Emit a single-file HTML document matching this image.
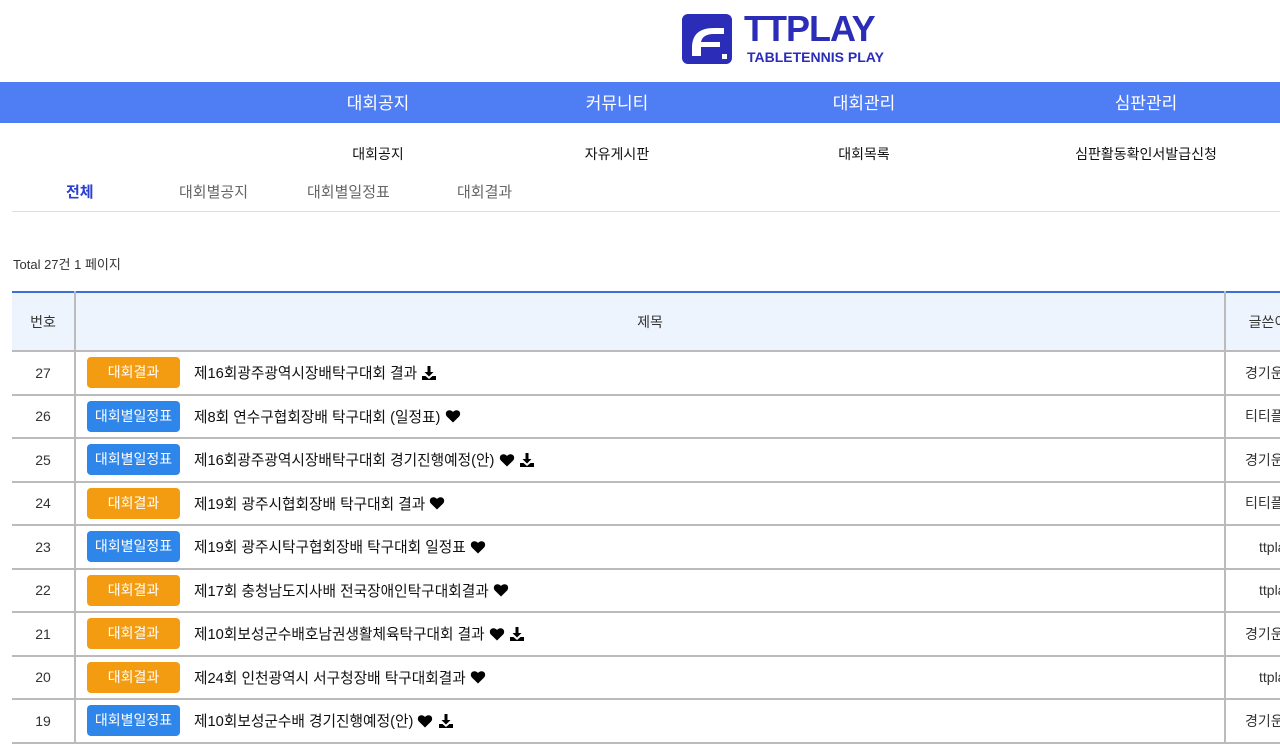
<!DOCTYPE html>
<html><head><meta charset="utf-8"><style>
*{margin:0;padding:0;box-sizing:border-box}
body{width:1280px;height:726px;overflow:hidden;background:#fff;font-family:"Liberation Sans","Noto Sans CJK KR",sans-serif;color:#222;position:relative}
.abs{position:absolute}
.nav{top:82px;left:0;width:1280px;height:41px;background:#4f7ef4}
.nav span,.sub span{position:absolute;transform:translateX(-50%);white-space:nowrap}
.nav span{color:#fff;font-size:17px;top:7px}
.sub span{font-size:14px;color:#111;top:144px}
.tab{top:181px;font-size:15px;color:#666}
table{position:absolute;left:12px;top:291px;border-collapse:collapse;width:1300px;font-size:14px}
thead tr{background:#eef4fd;border-top:2px solid #3d6fd6}
th{font-weight:normal;height:59px;border-right:2px solid #bbb;border-bottom:2px solid #bbb;color:#333}
td{height:43.5px;border-right:2px solid #bbb;border-bottom:2px solid #bbb;color:#333;vertical-align:middle}
td.n{text-align:center;width:63px}
td.t{width:1150px;padding-left:11px;color:#111;font-size:14.7px}
td.t *{vertical-align:middle}
td.a{text-align:left;padding-left:19px}
.b{display:inline-block;width:93px;height:31px;line-height:30px;border-radius:4px;color:#fff;text-align:center;font-size:14px;margin-right:14px}
.o{background:#f39c12}.bl{background:#2f86ea}
</style></head><body>
<svg width="0" height="0" style="position:absolute"><defs>
<symbol id="hr" viewBox="0 0 16 16"><path d="M8 14.5L2 8.6C0.3 6.9 0.5 4 2.5 2.8 4.4 1.7 6.6 2.3 8 4 9.4 2.3 11.6 1.7 13.5 2.8 15.5 4 15.7 6.9 14 8.6z" fill="#000"/></symbol>
<symbol id="dl" viewBox="0 0 16 16"><path d="M6.5 1h3v6h3L8 11.5 3.5 7h3z M1 11h3.5l3.5 3 3.5-3H15v4H1z" fill="#000"/></symbol>
</defs></svg>
<svg class="abs" style="left:682px;top:14px" width="50" height="50" viewBox="0 0 50 50"><rect width="50" height="50" rx="6" fill="#2b2db8"/><path d="M10 34c0-14 8-20 22-20h10v6H32c-8 0-12 3-13 8h19v5H19v9h-9z" fill="#fff"/><rect x="40" y="40" width="5" height="5" fill="#fff"/></svg>
<div class="abs" style="left:744px;top:8px;font-size:36px;font-weight:bold;color:#2b2db8;letter-spacing:-1px">TTPLAY</div>
<div class="abs" style="left:747px;top:49px;font-size:14px;color:#2b2db8;font-weight:bold">TABLETENNIS PLAY</div>
<div class="abs nav"><span style="left:378px">대회공지</span><span style="left:617px">커뮤니티</span><span style="left:864px">대회관리</span><span style="left:1146px">심판관리</span></div>
<div class="sub"><span style="left:378px">대회공지</span><span style="left:617px">자유게시판</span><span style="left:864px">대회목록</span><span style="left:1146px">심판활동확인서발급신청</span></div>
<div class="abs tab" style="left:66px;color:#2b3fd0;font-weight:bold">전체</div>
<div class="abs tab" style="left:179px">대회별공지</div>
<div class="abs tab" style="left:307px">대회별일정표</div>
<div class="abs tab" style="left:457px">대회결과</div>
<div class="abs" style="left:12px;top:211px;width:1268px;height:1px;background:#ddd"></div>
<div class="abs" style="left:13px;top:254px;font-size:13px;color:#333">Total 27건 1 페이지</div>
<table>
<thead><tr><th>번호</th><th>제목</th><th>글쓴이</th></tr></thead>
<tbody>
<tr><td class="n">27</td><td class="t"><span class="b o">대회결과</span><span>제16회광주광역시장배탁구대회 결과</span> <svg width="16" height="16"><use href="#dl"/></svg></td><td class="a">경기운영</td></tr>
<tr><td class="n">26</td><td class="t"><span class="b bl">대회별일정표</span><span>제8회 연수구협회장배 탁구대회 (일정표)</span> <svg width="16" height="16"><use href="#hr"/></svg></td><td class="a">티티플</td></tr>
<tr><td class="n">25</td><td class="t"><span class="b bl">대회별일정표</span><span>제16회광주광역시장배탁구대회 경기진행예정(안)</span> <svg width="16" height="16"><use href="#hr"/></svg> <svg width="16" height="16"><use href="#dl"/></svg></td><td class="a">경기운영</td></tr>
<tr><td class="n">24</td><td class="t"><span class="b o">대회결과</span><span>제19회 광주시협회장배 탁구대회 결과</span> <svg width="16" height="16"><use href="#hr"/></svg></td><td class="a">티티플</td></tr>
<tr><td class="n">23</td><td class="t"><span class="b bl">대회별일정표</span><span>제19회 광주시탁구협회장배 탁구대회 일정표</span> <svg width="16" height="16"><use href="#hr"/></svg></td><td class="a" style="padding-left:33px">ttplay</td></tr>
<tr><td class="n">22</td><td class="t"><span class="b o">대회결과</span><span>제17회 충청남도지사배 전국장애인탁구대회결과</span> <svg width="16" height="16"><use href="#hr"/></svg></td><td class="a" style="padding-left:33px">ttplay</td></tr>
<tr><td class="n">21</td><td class="t"><span class="b o">대회결과</span><span>제10회보성군수배호남권생활체육탁구대회 결과</span> <svg width="16" height="16"><use href="#hr"/></svg> <svg width="16" height="16"><use href="#dl"/></svg></td><td class="a">경기운영</td></tr>
<tr><td class="n">20</td><td class="t"><span class="b o">대회결과</span><span>제24회 인천광역시 서구청장배 탁구대회결과</span> <svg width="16" height="16"><use href="#hr"/></svg></td><td class="a" style="padding-left:33px">ttplay</td></tr>
<tr><td class="n">19</td><td class="t"><span class="b bl">대회별일정표</span><span>제10회보성군수배 경기진행예정(안)</span> <svg width="16" height="16"><use href="#hr"/></svg> <svg width="16" height="16"><use href="#dl"/></svg></td><td class="a">경기운영</td></tr>
</tbody></table>
</body></html>
